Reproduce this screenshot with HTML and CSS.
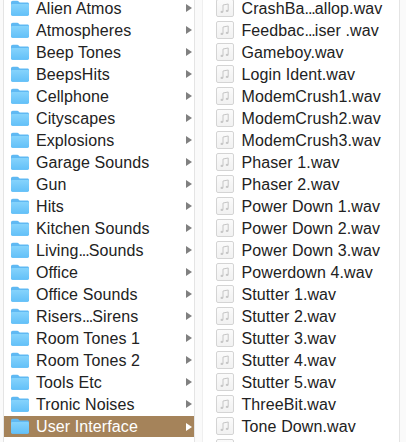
FILE: index.html
```html
<!DOCTYPE html>
<html lang="en">
<head>
<meta charset="utf-8">
<title>Finder columns</title>
<link rel="stylesheet" href="styles.css">
</head>
<body>
<svg class="defs" width="0" height="0" aria-hidden="true">
  <defs>
    <linearGradient id="fg" x1="0" y1="0" x2="0" y2="1"><stop offset="0" stop-color="#85d3fc"/><stop offset="1" stop-color="#62c0f8"/></linearGradient>
    <linearGradient id="ag" x1="0" y1="0" x2="0" y2="1"><stop offset="0" stop-color="#fbfbfb"/><stop offset="1" stop-color="#f1f1f1"/></linearGradient>
    <symbol id="folder" viewBox="0 0 20 17">
      <path d="M1 2.7C1 1.5 1.7.8 2.8.8H7.2C8 .8 8.4 1.1 8.9 1.7L9.7 2.5H17.4C18.4 2.5 19 3.2 19 4.2V14.1C19 15.1 18.4 15.8 17.4 15.8H2.6C1.6 15.8 1 15.1 1 14.1Z" fill="#5fb9f3"/>
      <path d="M1 5.5C1 4.6 1.6 4.1 2.6 4.1H17.4C18.4 4.1 19 4.6 19 5.5V14.1C19 15.1 18.4 15.8 17.4 15.8H2.6C1.6 15.8 1 15.1 1 14.1Z" fill="url(#fg)"/>
    </symbol>
    <symbol id="audio" viewBox="0 0 18 18">
      <rect x=".5" y=".5" width="17" height="17" rx="1.5" fill="url(#ag)" stroke="#d4d4d4"/>
      <path d="M7 12.6V6L12.2 5V11.6" fill="none" stroke="#c6c6c6"/>
      <ellipse cx="5.9" cy="12.9" rx="1.4" ry="1.1" fill="#c6c6c6"/>
      <ellipse cx="11.1" cy="11.9" rx="1.4" ry="1.1" fill="#c6c6c6"/>
    </symbol>
  </defs>
</svg>
<main class="browser">
  <ul class="column folders">
    <li class="row"><svg class="folder-icon"><use href="#folder"/></svg><span class="name">Alien Atmos</span><i class="arrow"></i></li>
    <li class="row"><svg class="folder-icon"><use href="#folder"/></svg><span class="name">Atmospheres</span><i class="arrow"></i></li>
    <li class="row"><svg class="folder-icon"><use href="#folder"/></svg><span class="name">Beep Tones</span><i class="arrow"></i></li>
    <li class="row"><svg class="folder-icon"><use href="#folder"/></svg><span class="name">BeepsHits</span><i class="arrow"></i></li>
    <li class="row"><svg class="folder-icon"><use href="#folder"/></svg><span class="name">Cellphone</span><i class="arrow"></i></li>
    <li class="row"><svg class="folder-icon"><use href="#folder"/></svg><span class="name">Cityscapes</span><i class="arrow"></i></li>
    <li class="row"><svg class="folder-icon"><use href="#folder"/></svg><span class="name">Explosions</span><i class="arrow"></i></li>
    <li class="row"><svg class="folder-icon"><use href="#folder"/></svg><span class="name">Garage Sounds</span><i class="arrow"></i></li>
    <li class="row"><svg class="folder-icon"><use href="#folder"/></svg><span class="name">Gun</span><i class="arrow"></i></li>
    <li class="row"><svg class="folder-icon"><use href="#folder"/></svg><span class="name">Hits</span><i class="arrow"></i></li>
    <li class="row"><svg class="folder-icon"><use href="#folder"/></svg><span class="name">Kitchen Sounds</span><i class="arrow"></i></li>
    <li class="row"><svg class="folder-icon"><use href="#folder"/></svg><span class="name">Living<span class="dots">...</span>Sounds</span><i class="arrow"></i></li>
    <li class="row"><svg class="folder-icon"><use href="#folder"/></svg><span class="name">Office</span><i class="arrow"></i></li>
    <li class="row"><svg class="folder-icon"><use href="#folder"/></svg><span class="name">Office Sounds</span><i class="arrow"></i></li>
    <li class="row"><svg class="folder-icon"><use href="#folder"/></svg><span class="name">Risers<span class="dots">...</span>Sirens</span><i class="arrow"></i></li>
    <li class="row"><svg class="folder-icon"><use href="#folder"/></svg><span class="name">Room Tones 1</span><i class="arrow"></i></li>
    <li class="row"><svg class="folder-icon"><use href="#folder"/></svg><span class="name">Room Tones 2</span><i class="arrow"></i></li>
    <li class="row"><svg class="folder-icon"><use href="#folder"/></svg><span class="name">Tools Etc</span><i class="arrow"></i></li>
    <li class="row"><svg class="folder-icon"><use href="#folder"/></svg><span class="name">Tronic Noises</span><i class="arrow"></i></li>
    <li class="row selected"><svg class="folder-icon"><use href="#folder"/></svg><span class="name">User Interface</span><i class="arrow"></i></li>
  </ul>
  <ul class="column files">
    <li class="row"><svg class="file-icon"><use href="#audio"/></svg><span class="name">CrashBa<span class="dots">...</span>allop.wav</span></li>
    <li class="row"><svg class="file-icon"><use href="#audio"/></svg><span class="name">Feedbac<span class="dots">...</span>iser .wav</span></li>
    <li class="row"><svg class="file-icon"><use href="#audio"/></svg><span class="name">Gameboy.wav</span></li>
    <li class="row"><svg class="file-icon"><use href="#audio"/></svg><span class="name">Login Ident.wav</span></li>
    <li class="row"><svg class="file-icon"><use href="#audio"/></svg><span class="name">ModemCrush1.wav</span></li>
    <li class="row"><svg class="file-icon"><use href="#audio"/></svg><span class="name">ModemCrush2.wav</span></li>
    <li class="row"><svg class="file-icon"><use href="#audio"/></svg><span class="name">ModemCrush3.wav</span></li>
    <li class="row"><svg class="file-icon"><use href="#audio"/></svg><span class="name">Phaser 1.wav</span></li>
    <li class="row"><svg class="file-icon"><use href="#audio"/></svg><span class="name">Phaser 2.wav</span></li>
    <li class="row"><svg class="file-icon"><use href="#audio"/></svg><span class="name">Power Down 1.wav</span></li>
    <li class="row"><svg class="file-icon"><use href="#audio"/></svg><span class="name">Power Down 2.wav</span></li>
    <li class="row"><svg class="file-icon"><use href="#audio"/></svg><span class="name">Power Down 3.wav</span></li>
    <li class="row"><svg class="file-icon"><use href="#audio"/></svg><span class="name">Powerdown 4.wav</span></li>
    <li class="row"><svg class="file-icon"><use href="#audio"/></svg><span class="name">Stutter 1.wav</span></li>
    <li class="row"><svg class="file-icon"><use href="#audio"/></svg><span class="name">Stutter 2.wav</span></li>
    <li class="row"><svg class="file-icon"><use href="#audio"/></svg><span class="name">Stutter 3.wav</span></li>
    <li class="row"><svg class="file-icon"><use href="#audio"/></svg><span class="name">Stutter 4.wav</span></li>
    <li class="row"><svg class="file-icon"><use href="#audio"/></svg><span class="name">Stutter 5.wav</span></li>
    <li class="row"><svg class="file-icon"><use href="#audio"/></svg><span class="name">ThreeBit.wav</span></li>
    <li class="row"><svg class="file-icon"><use href="#audio"/></svg><span class="name">Tone Down.wav</span></li>
    <li class="row"><svg class="file-icon"><use href="#audio"/></svg></li>
  </ul>
</main>
</body>
</html>
```
FILE: styles.css
```css
html, body {
  margin: 0;
  padding: 0;
  height: 100%;
  overflow: hidden;
  background: #fafafa;
}
.defs {
  position: absolute;
}
.browser {
  display: flex;
  height: 100%;
  padding-left: 3px;
  padding-right: 6px;
  box-sizing: border-box;
  font-family: "Liberation Sans", Arial, sans-serif;
  font-size: 16px;
  letter-spacing: 0.1px;
  color: #222;
}
.column {
  list-style: none;
  margin: 0;
  padding: 0;
  margin-top: -3px;
  background: #fff;
  border-right: 1px solid #e4e4e4;
}
.folders {
  width: 190px;
  border-left: 1px solid #e4e4e4;
  flex: none;
}
.files {
  flex: 1;
  margin-left: 7px;
  border-left: 1px solid #efefef;
}
.row {
  display: flex;
  align-items: center;
  height: 22px;
}
.name {
  padding-top: 2px;
}
.dots {
  letter-spacing: -1px;
}
.folder-icon {
  width: 20px;
  height: 17px;
  margin-left: 6px;
  margin-right: 6px;
  flex: none;
}
.file-icon {
  width: 18px;
  height: 18px;
  margin-left: 13px;
  margin-right: 7.5px;
  flex: none;
}
.folders .name {
  flex: 1;
}
.arrow {
  width: 0;
  height: 0;
  border-left: 6px solid #808080;
  border-top: 4px solid transparent;
  border-bottom: 4px solid transparent;
  margin-right: 2px;
}
.selected {
  box-sizing: border-box;
  padding-top: 1px;
  background: #a5835a content-box;
  color: #fff;
}
.selected .name {
  padding-top: 1px;
}
.selected .arrow {
  border-left-color: #fff;
}
```
